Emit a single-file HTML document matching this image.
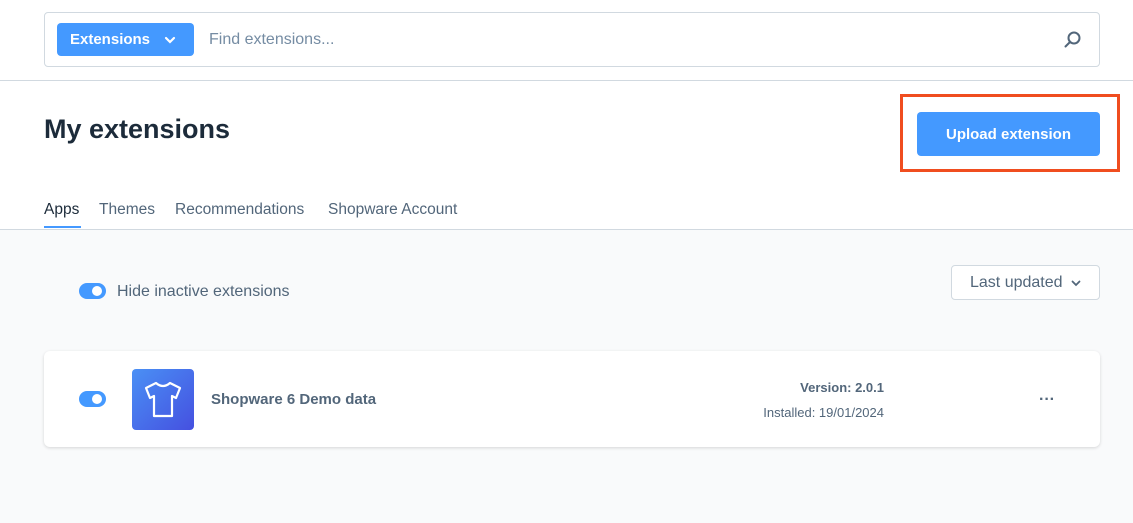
<!DOCTYPE html>
<html><head><meta charset="utf-8"><style>
*{box-sizing:border-box;margin:0;padding:0}
body{width:1133px;height:523px;overflow:hidden;background:#f9fafb;font-family:"Liberation Sans",sans-serif;position:relative;color:#52667a}
.top{position:absolute;left:0;top:0;width:1133px;height:230px;background:#fff}
.hr1{position:absolute;left:0;top:80px;width:1133px;height:1px;background:#d1d9e0}
.hr2{position:absolute;left:0;top:229px;width:1133px;height:1px;background:#d1d9e0}
.search{position:absolute;left:44px;top:12px;width:1056px;height:55px;border:1px solid #d1d9e0;border-radius:4px;background:#fff}
.ext{position:absolute;left:12px;top:10px;width:137px;height:33px;background:#4499ff;border-radius:4px;color:#fff;font-weight:bold;font-size:15px;line-height:34px;padding-left:13px}
.ph{position:absolute;left:164px;top:18px;font-size:16px;color:#758ca3}
h1{position:absolute;left:44px;top:114px;font-size:27px;font-weight:bold;color:#1c2b3a}
.red{position:absolute;left:900px;top:94px;width:220px;height:78px;border:3px solid #f04d1f}
.up{position:absolute;left:917px;top:112px;width:183px;height:44px;background:#4499ff;border-radius:4px;color:#fff;font-weight:bold;font-size:15px;text-align:center;line-height:45px}
.tabs{position:absolute;top:201px;font-size:15.5px;color:#52667a}
.tog{position:absolute;width:27px;height:16px;border-radius:8px;background:#4499ff}
.tog:after{content:"";position:absolute;right:4px;top:3px;width:10px;height:10px;border-radius:50%;background:#fff}
.sort{position:absolute;left:951px;top:265px;width:149px;height:35px;border:1px solid #d1d9e0;border-radius:4px;background:#fff;font-size:16px;line-height:34px;padding-left:18px;color:#52667a}
.card{position:absolute;left:44px;top:351px;width:1056px;height:96px;background:#fff;border-radius:6px;box-shadow:0 1px 3px rgba(0,0,0,.15)}
.icon{position:absolute;left:132px;top:369px;width:62px;height:61px;border-radius:4px;background:linear-gradient(135deg,#4a90f5,#4550e0)}
</style></head><body>
<div class="top"></div>
<div class="hr1"></div><div class="hr2"></div>
<div class="search"><div class="ext">Extensions <svg width="12" height="8" style="margin-left:10px" viewBox="0 0 12 8"><path d="M2 2l4 4 4-4" stroke="#fff" stroke-width="2.2" fill="none" stroke-linecap="round"/></svg></div>
<div class="ph">Find extensions...</div>
<svg style="position:absolute;left:1018px;top:17px" width="20" height="20" viewBox="0 0 20 20"><circle cx="11" cy="8" r="5.5" stroke="#52667a" stroke-width="2" fill="none"/><path d="M7 12l-4.5 4.5" stroke="#52667a" stroke-width="2" stroke-linecap="round"/></svg></div>
<h1>My extensions</h1>
<div class="red"></div>
<div class="up">Upload extension</div>
<div class="tabs" style="left:44px;color:#1c2b3a">Apps</div>
<div style="position:absolute;left:44px;top:226px;width:37px;height:2px;background:#4499ff"></div>
<div class="tabs" style="left:99px">Themes</div>
<div class="tabs" style="left:175px">Recommendations</div>
<div class="tabs" style="left:328px">Shopware Account</div>
<div class="tog" style="left:79px;top:283px"></div>
<div style="position:absolute;left:117px;top:283px;font-size:16px">Hide inactive extensions</div>
<div class="sort">Last updated <svg width="10" height="7" viewBox="0 0 10 7" style="margin-left:4px"><path d="M1.5 1.5l3.5 3.5 3.5-3.5" stroke="#52667a" stroke-width="1.8" fill="none" stroke-linecap="round"/></svg></div>
<div class="card"></div>
<div class="tog" style="left:79px;top:391px"></div>
<div class="icon"><svg width="62" height="61" viewBox="0 0 62 61"><path d="M24 14 L14 19 L18 29 L22 27 L22 47 L40 47 L40 27 L44 29 L48 19 L38 14 Q31 20 24 14Z" stroke="#fff" stroke-width="2.2" fill="none" stroke-linejoin="round"/></svg></div>
<div style="position:absolute;left:211px;top:391px;font-size:15px;font-weight:bold;color:#52667a">Shopware 6 Demo data</div>
<div style="position:absolute;right:249px;top:380px;font-size:13px;font-weight:bold;text-align:right">Version: 2.0.1</div>
<div style="position:absolute;right:249px;top:405px;font-size:13px;text-align:right">Installed: 19/01/2024</div>
<div style="position:absolute;left:1039px;top:391px;font-size:16px;font-weight:bold">···</div>
</body></html>
